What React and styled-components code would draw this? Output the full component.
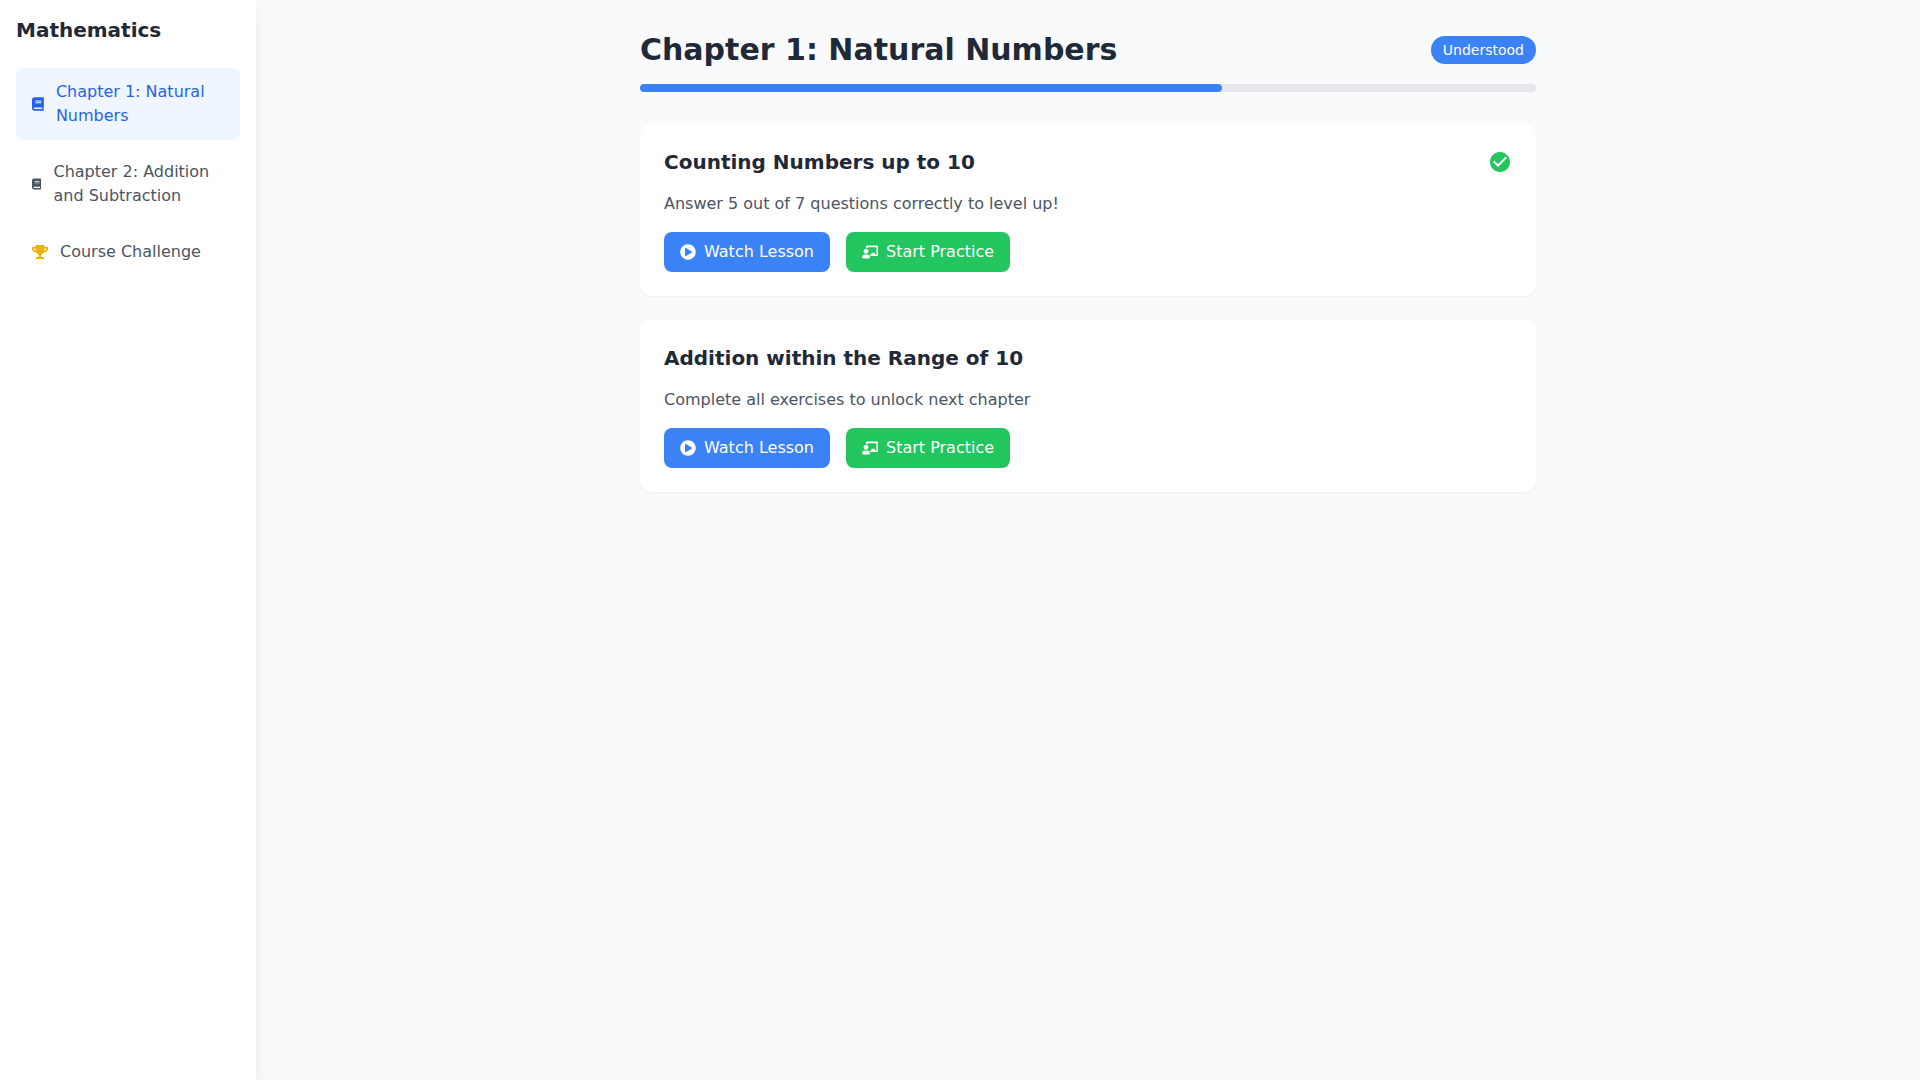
import styled, { createGlobalStyle } from "styled-components";
import {
  FaBook,
  FaChalkboardTeacher,
  FaPlayCircle,
  FaTrophy,
} from "react-icons/fa";
import { MdCheckCircle } from "react-icons/md";

const navItems = [
  { id: "chapter-1", label: "Chapter 1: Natural Numbers", Icon: FaBook, active: true },
  { id: "chapter-2", label: "Chapter 2: Addition and Subtraction", Icon: FaBook },
  { id: "challenge", label: "Course Challenge", Icon: FaTrophy, iconColor: "#eab308" },
];

const lessons = [
  {
    id: 1,
    title: "Counting Numbers up to 10",
    description: "Answer 5 out of 7 questions correctly to level up!",
    completed: true,
  },
  {
    id: 2,
    title: "Addition within the Range of 10",
    description: "Complete all exercises to unlock next chapter",
    completed: false,
  },
];

const progress = 65;

export default function App() {
  return (
    <>
      <GlobalStyle />
      <StyledPage>
        <StyledSidebar>
          <StyledCourseTitle>Mathematics</StyledCourseTitle>
          <StyledNav>
            {navItems.map(({ id, label, Icon, active, iconColor }) => (
              <StyledNavLink
                key={id}
                href={`#${id}`}
                $active={active}
                $iconColor={iconColor}
                aria-current={active ? "page" : undefined}
              >
                <Icon aria-hidden="true" />
                <span>{label}</span>
              </StyledNavLink>
            ))}
          </StyledNav>
        </StyledSidebar>
        <StyledMain>
          <StyledContent>
            <StyledHeader>
              <StyledHeadline>Chapter 1: Natural Numbers</StyledHeadline>
              <StyledBadge>Understood</StyledBadge>
            </StyledHeader>
            <StyledTrack
              role="progressbar"
              aria-label="Chapter progress"
              aria-valuenow={progress}
            >
              <StyledBar style={{ width: `${progress}%` }} />
            </StyledTrack>
            <StyledLessonList>
              {lessons.map((lesson) => (
                <LessonCard key={lesson.id} lesson={lesson} />
              ))}
            </StyledLessonList>
          </StyledContent>
        </StyledMain>
      </StyledPage>
    </>
  );
}

function LessonCard({ lesson }) {
  return (
    <StyledCard>
      <StyledCardHeader>
        <StyledCardTitle>{lesson.title}</StyledCardTitle>
        {lesson.completed && <StyledCheck aria-label="Completed" />}
      </StyledCardHeader>
      <StyledDescription>{lesson.description}</StyledDescription>
      <StyledActions>
        <StyledButton type="button" $color="#3b82f6" $hover="#2563eb">
          <FaPlayCircle aria-hidden="true" />
          Watch Lesson
        </StyledButton>
        <StyledButton type="button" $color="#22c55e" $hover="#16a34a">
          <FaChalkboardTeacher aria-hidden="true" />
          Start Practice
        </StyledButton>
      </StyledActions>
    </StyledCard>
  );
}

const GlobalStyle = createGlobalStyle`
  *,
  *::before,
  *::after {
    box-sizing: border-box;
  }

  body {
    margin: 0;
    background: #f9fafb;
    color: #1f2937;
    font-family: "DejaVu Sans", sans-serif;
    font-size: 16px;
    line-height: 24px;
  }

  h1,
  h2,
  p {
    margin: 0;
  }
`;

const StyledPage = styled.div`
  display: flex;
  min-height: 100vh;
`;

const StyledSidebar = styled.aside`
  width: 256px;
  flex-shrink: 0;
  padding: 16px;
  background: #ffffff;
  box-shadow: 0 10px 15px -3px rgba(0, 0, 0, 0.1),
    0 4px 6px -4px rgba(0, 0, 0, 0.1);
`;

const StyledCourseTitle = styled.h2`
  margin-bottom: 24px;
  font-size: 20px;
  line-height: 28px;
`;

const StyledNav = styled.nav`
  display: flex;
  flex-direction: column;
  gap: 8px;
`;

const StyledNavLink = styled.a`
  display: flex;
  align-items: center;
  gap: 12px;
  padding: 12px 16px;
  border-radius: 8px;
  background: ${({ $active }) => ($active ? "#eff6ff" : "transparent")};
  color: ${({ $active }) => ($active ? "#2563eb" : "#4b5563")};
  text-decoration: none;

  svg {
    color: ${({ $iconColor }) => $iconColor || "inherit"};
  }

  &:hover {
    background: ${({ $active }) => ($active ? "#eff6ff" : "#f9fafb")};
  }
`;

const StyledMain = styled.main`
  flex: 1;
  padding: 32px;
`;

const StyledContent = styled.div`
  max-width: 896px;
  margin: 0 auto;
`;

const StyledHeader = styled.header`
  display: flex;
  align-items: center;
  justify-content: space-between;
  margin-bottom: 16px;
`;

const StyledHeadline = styled.h1`
  font-size: 30px;
  line-height: 36px;
`;

const StyledBadge = styled.span`
  padding: 4px 12px;
  border-radius: 14px;
  background: #3b82f6;
  color: #ffffff;
  font-size: 14px;
  line-height: 20px;
`;

const StyledTrack = styled.div`
  height: 8px;
  margin-bottom: 32px;
  border-radius: 4px;
  background: #e5e7eb;
`;

const StyledBar = styled.div`
  height: 100%;
  border-radius: 4px;
  background: #3b82f6;
`;

const StyledLessonList = styled.div`
  display: grid;
  gap: 24px;
`;

const StyledCard = styled.article`
  padding: 24px;
  border-radius: 12px;
  background: #ffffff;
  box-shadow: 0 1px 2px 0 rgba(0, 0, 0, 0.05);
`;

const StyledCardHeader = styled.div`
  display: flex;
  align-items: center;
  justify-content: space-between;
  margin-bottom: 16px;
`;

const StyledCardTitle = styled.h2`
  font-size: 20px;
  line-height: 28px;
`;

const StyledCheck = styled(MdCheckCircle)`
  color: #22c55e;
  font-size: 24px;
`;

const StyledDescription = styled.p`
  margin-bottom: 16px;
  color: #4b5563;
`;

const StyledActions = styled.div`
  display: flex;
  gap: 16px;
`;

const StyledButton = styled.button`
  display: flex;
  align-items: center;
  gap: 8px;
  padding: 8px 16px;
  border: none;
  border-radius: 8px;
  background: ${({ $color }) => $color};
  color: #ffffff;
  font: inherit;
  cursor: pointer;

  &:hover {
    background: ${({ $hover }) => $hover};
  }
`;
